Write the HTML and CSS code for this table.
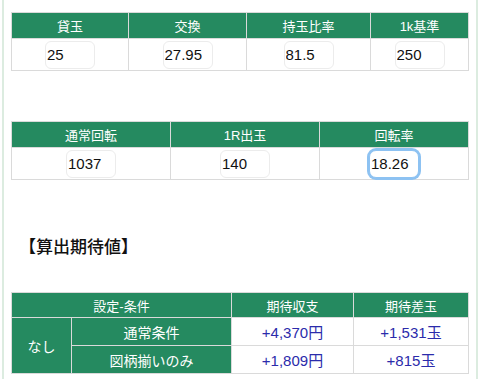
FILE: index.html
```html
<!DOCTYPE html>
<html lang="ja">
<head>
<meta charset="utf-8">
<link rel="stylesheet" href="styles.css">
</head>
<body>
<div class="page">
  <table class="grid t1">
    <colgroup><col style="width:117px"><col style="width:118px"><col style="width:124px"><col style="width:98px"></colgroup>
    <tr class="head"><th>貸玉</th><th>交換</th><th>持玉比率</th><th>1k基準</th></tr>
    <tr class="data">
      <td><input class="num" type="text" value="25"></td>
      <td><input class="num" type="text" value="27.95"></td>
      <td><input class="num" type="text" value="81.5"></td>
      <td><input class="num" type="text" value="250"></td>
    </tr>
  </table>

  <table class="grid t2">
    <colgroup><col style="width:159px"><col style="width:149px"><col style="width:149px"></colgroup>
    <tr class="head"><th>通常回転</th><th>1R出玉</th><th>回転率</th></tr>
    <tr class="data">
      <td><input class="num" type="text" value="1037"></td>
      <td><input class="num" type="text" value="140"></td>
      <td><input class="num focus" type="text" value="18.26"></td>
    </tr>
  </table>

  <h3 class="section">【算出期待値】</h3>

  <table class="grid t3">
    <colgroup><col style="width:60px"><col style="width:160px"><col style="width:122px"><col style="width:115px"></colgroup>
    <tr class="head"><th colspan="2">設定-条件</th><th>期待収支</th><th>期待差玉</th></tr>
    <tr class="row">
      <th rowspan="2" class="g">なし</th>
      <th class="g">通常条件</th>
      <td class="val">+4,370円</td>
      <td class="val">+1,531玉</td>
    </tr>
    <tr class="row">
      <th class="g">図柄揃いのみ</th>
      <td class="val">+1,809円</td>
      <td class="val">+815玉</td>
    </tr>
  </table>
</div>
</body>
</html>
```
FILE: styles.css
```css
html, body {
  margin: 0;
  padding: 0;
  background: #ffffff;
}
body {
  font-family: "Liberation Sans", "Noto Sans CJK JP", sans-serif;
  color: #111;
}
.page {
  margin-left: 2px;
  min-height: 379px;
  border-left: 2px solid #dcece0;
  border-right: 2px solid #dcece0;
  padding: 12px 7px 0 7px;
  box-sizing: border-box;
  width: 476px;
}
.grid {
  width: 457px;
  border-collapse: collapse;
  table-layout: fixed;
}
.grid th, .grid td {
  border: 1px solid #dadada;
  padding: 0;
  text-align: center;
}
.head th {
  background: #258a60;
  color: #fff;
  font-weight: normal;
  font-size: 13px;
  height: 25px;
}
.data td {
  height: 31px;
  background: #fff;
}
.num {
  width: 50px;
  height: 28px;
  box-sizing: border-box;
  border: 1px solid #ececec;
  border-radius: 6px;
  padding: 0 1px;
  margin: 0;
  font-family: "Liberation Sans", sans-serif;
  font-size: 15px;
  color: #111;
  background: #fff;
  vertical-align: middle;
  outline: none;
}
.num.focus {
  border-color: #8dc2f2;
  box-shadow: 0 0 0 2px #8dc2f2;
  border-radius: 7px;
}
.t2 {
  margin-top: 50px;
}
.section {
  margin: 54px 0 0 8px;
  font-size: 17px;
  font-weight: 500;
  line-height: 24px;
  height: 24px;
  font-family: "Noto Sans CJK JP", sans-serif;
}
.t3 {
  margin-top: 34px;
}
.t3 .head th {
  height: 24px;
}
.row th.g {
  background: #258a60;
  color: #fff;
  font-weight: normal;
  font-size: 14px;
  height: 27px;
}
.val {
  color: #2b2bab;
  font-size: 15px;
  height: 27px;
}
```
